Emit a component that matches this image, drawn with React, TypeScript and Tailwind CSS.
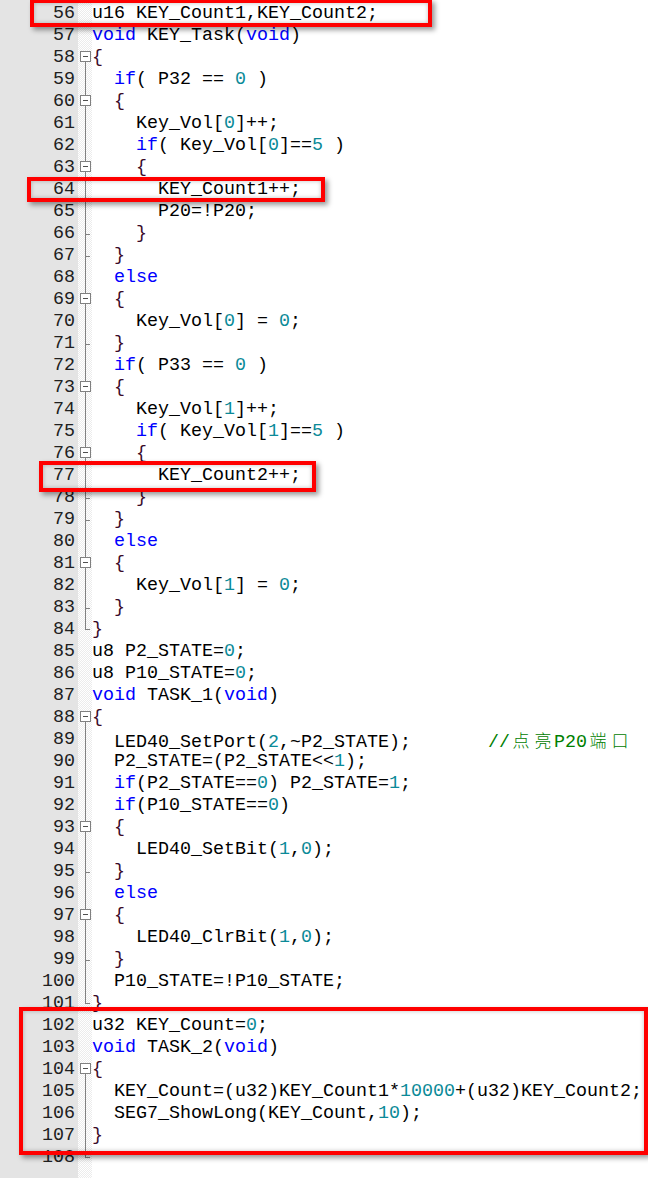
import React from "react";

type Fold = "none" | "start" | "open" | "mid" | "tick" | "tail";

const FIRST = 56;

const code: string[] = [
  "u16 KEY_Count1,KEY_Count2;",
  "void KEY_Task(void)",
  "{",
  "  if( P32 == 0 )",
  "  {",
  "    Key_Vol[0]++;",
  "    if( Key_Vol[0]==5 )",
  "    {",
  "      KEY_Count1++;",
  "      P20=!P20;",
  "    }",
  "  }",
  "  else",
  "  {",
  "    Key_Vol[0] = 0;",
  "  }",
  "  if( P33 == 0 )",
  "  {",
  "    Key_Vol[1]++;",
  "    if( Key_Vol[1]==5 )",
  "    {",
  "      KEY_Count2++;",
  "    }",
  "  }",
  "  else",
  "  {",
  "    Key_Vol[1] = 0;",
  "  }",
  "}",
  "u8 P2_STATE=0;",
  "u8 P10_STATE=0;",
  "void TASK_1(void)",
  "{",
  "  LED40_SetPort(2,~P2_STATE);       //点亮P20端口",
  "  P2_STATE=(P2_STATE<<1);",
  "  if(P2_STATE==0) P2_STATE=1;",
  "  if(P10_STATE==0)",
  "  {",
  "    LED40_SetBit(1,0);",
  "  }",
  "  else",
  "  {",
  "    LED40_ClrBit(1,0);",
  "  }",
  "  P10_STATE=!P10_STATE;",
  "}",
  "u32 KEY_Count=0;",
  "void TASK_2(void)",
  "{",
  "  KEY_Count=(u32)KEY_Count1*10000+(u32)KEY_Count2;",
  "  SEG7_ShowLong(KEY_Count,10);",
  "}",
  "",
];

// fold margin, keyed by line number
const folds: Record<number, Fold> = {};
const ranges: [number, number][] = [
  [58, 84],
  [88, 101],
  [104, 108],
];
ranges.forEach(([a, b]) => {
  for (let i = a; i <= b; i++) folds[i] = "mid";
  folds[a] = "start";
  folds[b] = "tail";
});
[60, 63, 69, 73, 76, 81, 93, 97].forEach((n) => (folds[n] = "open"));
[66, 67, 71, 78, 79, 83, 95, 99].forEach((n) => (folds[n] = "tick"));

const KEYWORDS = ["void", "if", "else"];

const Token = ({ text }: { text: string }) => {
  if (text.startsWith("//")) {
    return (
      <span className="text-[#008000]">
        {Array.from(text).map((ch, i) =>
          /[\u4e00-\u9fff]/.test(ch) ? (
            <span
              key={i}
              className="inline-block w-[22px] text-center font-['Noto_Sans_CJK_SC',sans-serif] text-[17px] font-light"
            >
              {ch}
            </span>
          ) : (
            <span key={i}>{ch}</span>
          )
        )}
      </span>
    );
  }
  if (KEYWORDS.includes(text)) return <span className="text-[#0000ff]">{text}</span>;
  if (/^\d+$/.test(text)) return <span className="text-[#0b8a98]">{text}</span>;
  if (text === "{" || text === "}") return <span className="text-[#3a0a2a]">{text}</span>;
  return <span>{text}</span>;
};

const CodeLine = ({ line }: { line: string }) => {
  const parts = line.match(/\/\/.*$|[A-Za-z_][A-Za-z0-9_]*|\d+|\s+|./g) || [];
  return (
    <div className="h-[22px] whitespace-pre">
      {parts.map((p, i) => (
        <Token key={i} text={p} />
      ))}
    </div>
  );
};

// Scintilla-style fold marker, drawn per line
const FoldCell = ({ type }: { type: Fold }) => (
  <svg width="14" height="22" className="block" shapeRendering="crispEdges">
    <g stroke="#808080" strokeWidth="1" fill="none">
      {(type === "mid" || type === "open" || type === "tick") && <line x1="7.5" y1="0" x2="7.5" y2="22" />}
      {type === "start" && <line x1="7.5" y1="15" x2="7.5" y2="22" />}
      {type === "tail" && <path d="M7.5 0V10.5H12" />}
      {type === "tick" && <line x1="7.5" y1="11.5" x2="12" y2="11.5" />}
      {(type === "start" || type === "open") && (
        <>
          <rect x="2.5" y="4.5" width="10" height="10" fill="#ffffff" />
          <line x1="5" y1="9.5" x2="10" y2="9.5" stroke="#505050" />
        </>
      )}
    </g>
  </svg>
);

const Highlight = ({ className }: { className: string }) => (
  <div
    className={`absolute border-4 border-[#ff0000] shadow-[3px_3px_5px_rgba(0,0,0,0.4),inset_0_0_4px_rgba(0,0,0,0.25)] ${className}`}
  />
);

export default function App() {
  return (
    <div className="relative w-[648px] h-[1178px] overflow-hidden bg-white font-['Liberation_Mono',monospace] text-[18.33px] leading-[22px] text-black">
      <div className="flex h-full">
        <div className="w-[78px] shrink-0 bg-[#e4e4e4] pt-[3px] pr-[3px] text-right text-[#202020]">
          {code.map((_, i) => (
            <div key={i} className="h-[22px]">
              {FIRST + i}
            </div>
          ))}
        </div>
        <div className="w-[14px] shrink-0 pt-[3px] bg-[repeating-conic-gradient(#ececec_0_25%,#ffffff_0_50%)] bg-[length:2px_2px]">
          {code.map((_, i) => (
            <FoldCell key={i} type={folds[FIRST + i] || "none"} />
          ))}
        </div>
        <div className="flex-1 pt-[3px]">
          {code.map((line, i) => (
            <CodeLine key={i} line={line} />
          ))}
        </div>
      </div>

      {/* red callout frames drawn over the editor */}
      <Highlight className="left-[30px] top-[-1px] w-[402px] h-[28px]" />
      <Highlight className="left-[27px] top-[177px] w-[298px] h-[25px]" />
      <Highlight className="left-[39px] top-[461px] w-[277px] h-[31px]" />
      <Highlight className="left-[19px] top-[1007px] w-[629px] h-[148px]" />
    </div>
  );
}
